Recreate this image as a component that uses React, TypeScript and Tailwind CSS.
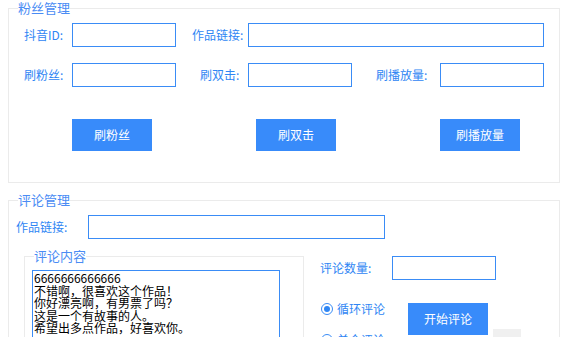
import type { ReactNode } from 'react';

const font = { fontFamily: '"Noto Sans CJK SC", "Noto Sans", sans-serif' };

function Label({ children, className = '' }: { children: ReactNode; className?: string }) {
  return <span className={`shrink-0 text-[12px] leading-[14px] text-[#2f86f4] ${className}`}>{children}</span>;
}

function Field({ className = '' }: { className?: string }) {
  return (
    <input
      type="text"
      className={`h-[24px] shrink-0 border border-[#3a8cf6] bg-white outline-none ${className}`}
    />
  );
}

function BlueButton({ children, className = '' }: { children: ReactNode; className?: string }) {
  return (
    <button
      type="button"
      className={`h-[32px] w-[80px] shrink-0 bg-[#388bfa] text-[12px] text-white ${className}`}
    >
      {children}
    </button>
  );
}

function Radio({ label, checked = false }: { label: string; checked?: boolean }) {
  return (
    <label className="flex items-center">
      <span className="flex h-[12px] w-[12px] items-center justify-center rounded-full border border-[#3a8cf6] bg-white">
        {checked && <span className="h-[6px] w-[6px] rounded-full bg-[#2f86f4]" />}
      </span>
      <span className="ml-[4px] text-[12px] leading-[14px] text-[#2f86f4]">{label}</span>
    </label>
  );
}

export default function App() {
  return (
    <div className="h-[337px] w-[569px] overflow-hidden bg-white" style={font}>
      <fieldset className="ml-[8px] w-[552px] border border-[#ebebeb]">
        <legend className="ml-[9px] text-[13px] leading-[16px] text-[#4a8cf4]">粉丝管理</legend>
        <div className="pb-[31px] pl-[15px] pt-[7px]">
          <div className="flex items-center">
            <Label className="w-[48px]">抖音ID:</Label>
            <Field className="w-[104px]" />
            <Label className="ml-[16px] w-[56px]">作品链接:</Label>
            <Field className="w-[296px]" />
          </div>
          <div className="mt-[16px] flex items-center">
            <Label className="w-[48px]">刷粉丝:</Label>
            <Field className="w-[104px]" />
            <Label className="ml-[24px] w-[48px]">刷双击:</Label>
            <Field className="w-[104px]" />
            <Label className="ml-[24px] w-[64px]">刷播放量:</Label>
            <Field className="w-[104px]" />
          </div>
          <div className="mt-[32px] flex gap-[104px] pl-[48px]">
            <BlueButton>刷粉丝</BlueButton>
            <BlueButton>刷双击</BlueButton>
            <BlueButton>刷播放量</BlueButton>
          </div>
        </div>
      </fieldset>

      <fieldset className="ml-[8px] mt-[10px] w-[552px] border border-[#ebebeb]">
        <legend className="ml-[9px] text-[13px] leading-[14px] text-[#4a8cf4]">评论管理</legend>
        <div className="pt-[8px] pl-[7px]">
          <div className="flex items-center">
            <Label className="w-[72px]">作品链接:</Label>
            <Field className="w-[297px]" />
          </div>
          <div className="mt-[10px] flex items-start">
            <fieldset className="ml-[8px] w-[280px] border border-[#ebebeb]">
              <legend className="ml-[9px] text-[13px] leading-[14px] text-[#4a8cf4]">评论内容</legend>
              <textarea
                readOnly
                className="ml-[7px] mt-[7px] h-[80px] w-[248px] resize-none border border-[#3a8cf6] px-[1px] py-[1px] text-[12px] leading-[12.5px] text-black outline-none"
                style={font}
                defaultValue={'6666666666666\n不错啊，很喜欢这个作品！\n你好漂亮啊，有男票了吗？\n这是一个有故事的人。\n希望出多点作品，好喜欢你。'}
              />
            </fieldset>
            <div className="ml-[16px] mt-[7px]">
              <div className="flex items-center">
                <Label className="w-[72px]">评论数量:</Label>
                <Field className="w-[104px]" />
              </div>
              <div className="mt-[22px] flex items-start">
                <div className="flex w-[88px] flex-col gap-[17px] pl-[1px]">
                  <Radio label="循环评论" checked />
                  <Radio label="单个评论" />
                </div>
                <BlueButton className="mt-[1px]">开始评论</BlueButton>
                <div className="ml-[5px] mt-[27px] h-[10px] w-[28px] bg-[#f0f0f0]" />
              </div>
            </div>
          </div>
        </div>
      </fieldset>
    </div>
  );
}
